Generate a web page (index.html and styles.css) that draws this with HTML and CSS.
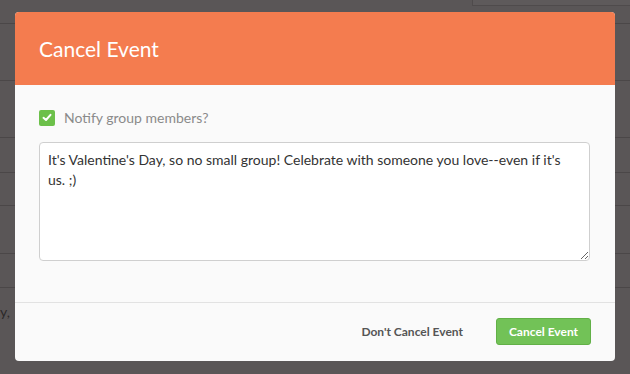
FILE: index.html
```html
<!DOCTYPE html>
<html lang="en">
<head>
    <meta charset="UTF-8">
    <meta name="viewport" content="width=device-width, initial-scale=1.0">
    <title>Cancel Event</title>
    <link rel="stylesheet" href="styles.css">
</head>
<body>
    <div class="page">
        <div class="page-tab"></div>
        <div class="page-rows">
            <div class="row"></div>
            <div class="row"></div>
            <div class="row"></div>
            <div class="row"></div>
            <div class="row"></div>
            <div class="row"></div>
            <div class="row"></div>
        </div>
        <div class="page-text">y,</div>
    </div>

    <div class="modal">
        <div class="modal-header">
            <h1>Cancel Event</h1>
        </div>
        <div class="modal-body">
            <label class="check">
                <span class="check-box">
                    <svg width="10" height="9" viewBox="0 0 10 9">
                        <path d="M1.5 4.8 L4 7 L8.5 1.8" fill="none" stroke="#fff" stroke-width="2" stroke-linecap="round" stroke-linejoin="round"/>
                    </svg>
                </span>
                Notify group members?
            </label>
            <textarea class="message">It's Valentine's Day, so no small group! Celebrate with someone you love--even if it's us. ;)</textarea>
        </div>
        <div class="modal-footer">
            <button class="btn-link">Don't Cancel Event</button>
            <button class="btn">Cancel Event</button>
        </div>
    </div>
</body>
</html>
```

FILE: styles.css
```css
html, body {
    height: 374px;
    overflow: hidden;
}
body {
    font-family: 'Lato', 'Liberation Sans', sans-serif;
    background: #5a5657;
    margin: 0;
    padding: 0;
    position: relative;
}
.page {
    padding-top: 23px;
}
.page-tab {
    position: absolute;
    top: 0;
    left: 472px;
    right: 0;
    height: 5px;
    background: #5e5a5b;
    border-left: 1px solid #4f4b4c;
    border-bottom: 1px solid #4f4b4c;
}
.page-rows .row {
    height: 0;
    border-top: 1px solid #4b4748;
}
.page-rows .row:nth-child(2) { margin-top: 56px; }
.page-rows .row:nth-child(3) { margin-top: 56px; }
.page-rows .row:nth-child(4) { margin-top: 34px; }
.page-rows .row:nth-child(5) { margin-top: 32px; }
.page-rows .row:nth-child(6) { margin-top: 47px; }
.page-rows .row:nth-child(7) { margin-top: 33px; }
.page-text {
    position: absolute;
    top: 303px;
    left: 0;
    font-size: 14px;
    color: #2b2829;
}
.modal {
    position: absolute;
    top: 12px;
    left: 15px;
    width: 600px;
    height: 349px;
    background: #fafafa;
    border-radius: 4px;
    overflow: hidden;
    display: flex;
    flex-direction: column;
}
.modal-header {
    background: #f47c4f;
    height: 73px;
    padding: 0 24px;
    display: flex;
    align-items: center;
}
.modal-header h1 {
    margin: 0;
    font-size: 21px;
    font-weight: normal;
    color: #fff;
}
.modal-body {
    padding: 24px 24px 0;
    height: 193px;
    border-bottom: 1px solid #e2e2e2;
}
.check {
    display: flex;
    align-items: center;
    gap: 9px;
    font-size: 14px;
    color: #8a8a8a;
    height: 17px;
}
.check-box {
    width: 16px;
    height: 16px;
    border-radius: 2px;
    background: #6cc04a;
    display: flex;
    align-items: center;
    justify-content: center;
}
.message {
    display: block;
    margin-top: 16px;
    width: 551px;
    height: 119px;
    box-sizing: border-box;
    border: 1px solid #cfcfcf;
    border-radius: 4px;
    background: #fff;
    padding: 7px 8px;
    font-family: 'Lato', 'Liberation Sans', sans-serif;
    font-size: 14px;
    line-height: 20px;
    color: #333;
}
.modal-footer {
    flex: 1;
    display: flex;
    justify-content: flex-end;
    align-items: center;
    gap: 33px;
    padding: 0 24px 2px;
}
.btn-link {
    background: none;
    border: none;
    padding: 0;
    font-family: 'Lato', 'Liberation Sans', sans-serif;
    font-size: 12px;
    font-weight: bold;
    color: #555;
}
.btn {
    width: 95px;
    height: 27px;
    background: #72c257;
    border: 1px solid #62b047;
    border-radius: 3px;
    color: #fff;
    font-family: 'Lato', 'Liberation Sans', sans-serif;
    font-size: 12px;
    font-weight: bold;
}
```
